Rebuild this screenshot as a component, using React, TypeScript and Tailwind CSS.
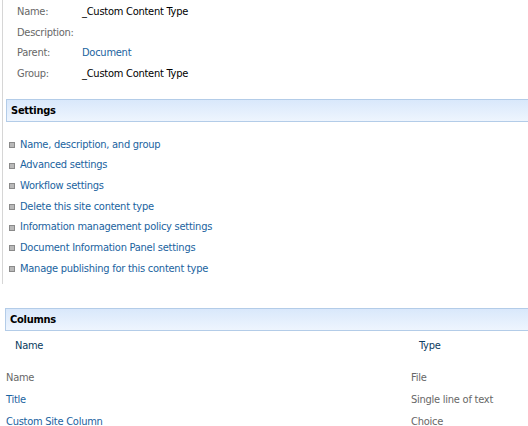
import React from "react";

const settingsLinks = [
  "Name, description, and group",
  "Advanced settings",
  "Workflow settings",
  "Delete this site content type",
  "Information management policy settings",
  "Document Information Panel settings",
  "Manage publishing for this content type",
];

const columns = [
  { name: "Name", type: "File", link: false },
  { name: "Title", type: "Single line of text", link: true },
  { name: "Custom Site Column", type: "Choice", link: true },
];

function SectionBar({ title }: { title: string }) {
  return (
    <div className="h-[23px] pt-[2px] flex items-center pl-[4px] border-y border-l border-[#b3cce8] bg-gradient-to-b from-[#d9e8fb] to-[#eef5fe] font-bold text-black">
      {title}
    </div>
  );
}

export default function App() {
  return (
    <div className="w-[528px] h-[426px] overflow-hidden bg-white text-[11px] tracking-[-0.25px] font-['DejaVu_Sans_Condensed','DejaVu_Sans',sans-serif]">
      <div className="ml-[2px] border-l border-[#d6d6d6] pb-[6px]">
        {/* content type properties */}
        <div className="flex flex-col">
          <div className="h-[21px] pt-[3px] flex items-center">
            <span className="w-[79px] pl-[14px] text-[#676767]">Name:</span>
            <span className="text-black">_Custom Content Type</span>
          </div>
          <div className="h-[21px] pt-[3px] flex items-center">
            <span className="w-[79px] pl-[14px] text-[#676767]">Description:</span>
          </div>
          <div className="h-[20px] pt-[3px] flex items-center">
            <span className="w-[79px] pl-[14px] text-[#676767]">Parent:</span>
            <span className="text-[#1a63a0]">Document</span>
          </div>
          <div className="h-[22px] pt-[3px] flex items-center">
            <span className="w-[79px] pl-[14px] text-[#676767]">Group:</span>
            <span className="text-black">_Custom Content Type</span>
          </div>
        </div>

        <div className="mt-[15px] ml-[3px]">
          <SectionBar title="Settings" />
        </div>

        <ul className="pt-[11px] flex flex-col">
          {settingsLinks.map((label) => (
            <li key={label} className="h-[20.7px] pt-[3px] flex items-center">
              <span className="ml-[6px] mr-[5px] w-[6px] h-[6px] bg-[#b9b9b9] border border-[#8a8a8a]" />
              <span className="text-[#1a63a0]">{label}</span>
            </li>
          ))}
        </ul>
      </div>

      <div className="mt-[24px] ml-[5px]">
        <SectionBar title="Columns" />
      </div>

      {/* columns table */}
      <div className="flex h-[30px] pt-[1px] items-center text-[#0b3b5e]">
        <span className="w-[411px] pl-[15px]">Name</span>
        <span className="pl-[8px]">Type</span>
      </div>
      <div className="mt-[5px] flex flex-col">
        {columns.map((c) => (
          <div key={c.name} className="h-[22px] pt-[3px] flex items-center">
            <span className={`w-[411px] pl-[6px] ${c.link ? "text-[#1a63a0]" : "text-[#676767]"}`}>
              {c.name}
            </span>
            <span className="text-[#676767]">{c.type}</span>
          </div>
        ))}
      </div>
    </div>
  );
}
